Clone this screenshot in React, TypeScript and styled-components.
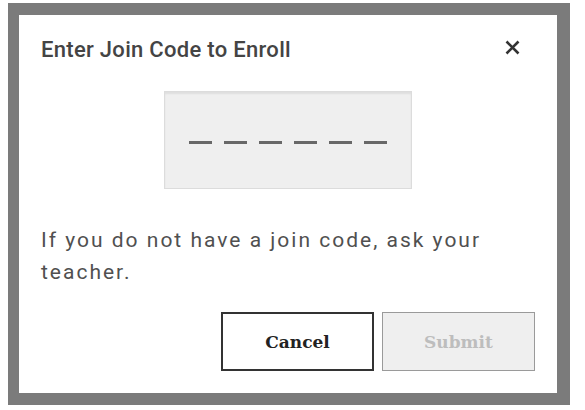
import React from "react";
import styled, { createGlobalStyle } from "styled-components";

const Global = createGlobalStyle`
  html, body { margin: 0; padding: 0; background: #ffffff; }
  body { font-family: Roboto, "Noto Sans", sans-serif; }
  * { box-sizing: border-box; }
`;

const Backdrop = styled.div`
  margin: 3px 0 0 8px;
  width: 562px;
  height: 402px;
  background: #7b7b7b;
  padding: 12px 13px 12px 11px;
`;

const Dialog = styled.div`
  width: 538px;
  height: 378px;
  background: #ffffff;
  padding: 22px;
  display: flex;
  flex-direction: column;
`;

const Header = styled.div`
  display: flex;
  align-items: flex-start;
  justify-content: space-between;
  height: 24px;
`;

const Title = styled.h2`
  margin: 1px 0 0 0;
  font-family: Roboto, "Noto Sans", sans-serif;
  font-weight: 500;
  font-size: 22px;
  line-height: 24px;
  letter-spacing: 0.3px;
  color: #444444;
`;

const CloseButton = styled.button`
  border: 0;
  background: transparent;
  padding: 0;
  margin: 3px 15px 0 0;
  width: 15px;
  height: 15px;
  display: flex;
  cursor: pointer;
`;

const CodeBox = styled.div`
  align-self: center;
  margin-top: 30px;
  width: 248px;
  height: 98px;
  background: #efefef;
  border: 1px solid #dcdcdc;
  box-shadow: inset 0 2px 2px rgba(0, 0, 0, 0.07);
  display: flex;
  align-items: center;
  justify-content: center;
  gap: 12px;
  padding-top: 5px;
`;

const Dash = styled.span`
  width: 23px;
  height: 3px;
  background: #686868;
`;

const Help = styled.p`
  margin: 35px 0 0 0;
  font-family: Roboto, "Noto Sans", sans-serif;
  font-size: 21px;
  line-height: 32px;
  letter-spacing: 2px;
  color: #505050;
`;

const Actions = styled.div`
  margin-top: auto;
  display: flex;
  justify-content: flex-end;
  gap: 8px;
`;

const ActionButton = styled.button<{ $disabled?: boolean }>`
  width: 153px;
  height: 59px;
  font-family: "DejaVu Serif", "Liberation Serif", serif;
  font-weight: 700;
  font-size: 17px;
  color: ${(p) => (p.$disabled ? "#bdbdbd" : "#222222")};
  background: ${(p) => (p.$disabled ? "#efefef" : "#ffffff")};
  border: ${(p) => (p.$disabled ? "1.5px solid #9a9a9a" : "2px solid #333333")};
  cursor: ${(p) => (p.$disabled ? "default" : "pointer")};
  padding: 0;
`;

export default function App() {
  return (
    <>
      <Global />
      <Backdrop>
        <Dialog>
          <Header>
            <Title>Enter Join Code to Enroll</Title>
            <CloseButton aria-label="Close">
              <svg width="15" height="15" viewBox="0 0 15 15">
                <path d="M1.5 1.5 L13.5 13.5 M13.5 1.5 L1.5 13.5" stroke="#333" strokeWidth="2.6" strokeLinecap="butt" />
              </svg>
            </CloseButton>
          </Header>
          <CodeBox>
            {Array.from({ length: 6 }).map((_, i) => (
              <Dash key={i} />
            ))}
          </CodeBox>
          <Help>If you do not have a join code, ask your teacher.</Help>
          <Actions>
            <ActionButton>Cancel</ActionButton>
            <ActionButton $disabled>Submit</ActionButton>
          </Actions>
        </Dialog>
      </Backdrop>
    </>
  );
}
